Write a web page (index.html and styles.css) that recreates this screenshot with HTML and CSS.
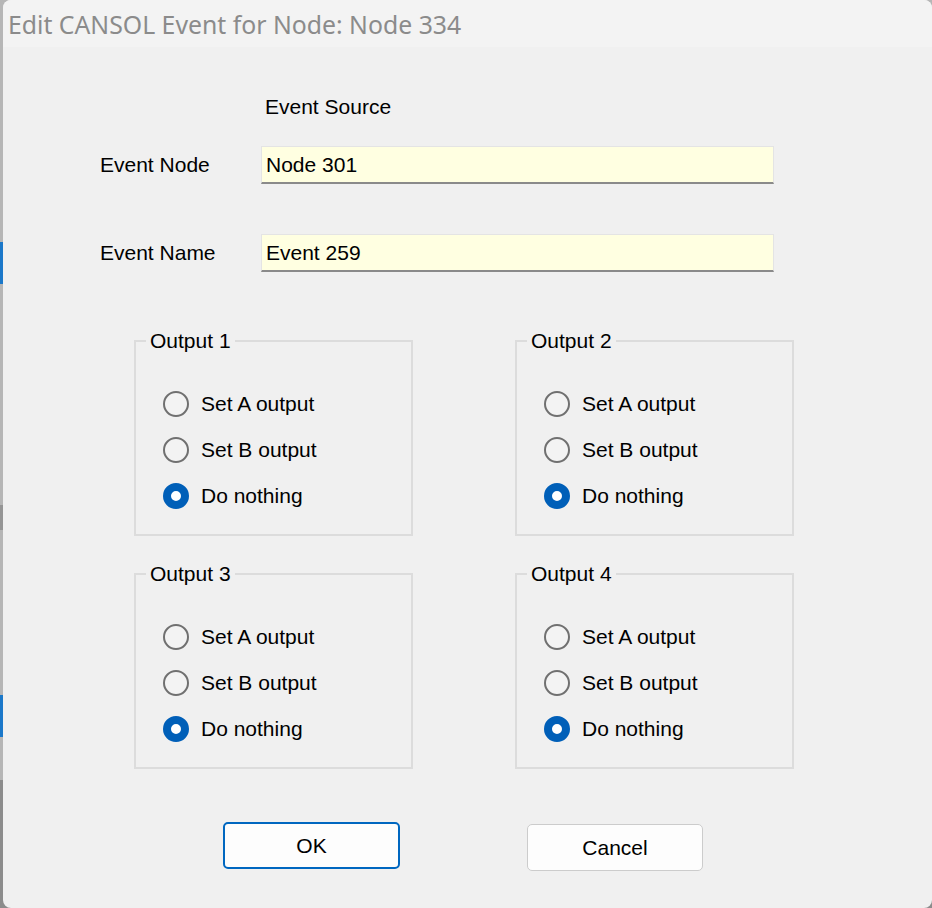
FILE: index.html
```html
<!DOCTYPE html>
<html lang="en">
<head>
<meta charset="utf-8">
<title>Edit CANSOL Event</title>
<link rel="stylesheet" href="styles.css">
</head>
<body>
<div class="window">
  <div class="titlebar">Edit CANSOL Event for Node: Node 334</div>
  <div class="content">
    <div class="form">
      <div class="source">Event Source</div>
      <div class="row row-node">
        <div class="label">Event Node</div>
        <div class="field">Node 301</div>
      </div>
      <div class="row row-name">
        <div class="label">Event Name</div>
        <div class="field">Event 259</div>
      </div>
    </div>

    <div class="groups">
      <fieldset class="group">
        <legend>Output 1</legend>
        <div class="radio-row"><span class="radio"></span>Set A output</div>
        <div class="radio-row"><span class="radio"></span>Set B output</div>
        <div class="radio-row"><span class="radio checked"></span>Do nothing</div>
      </fieldset>
      <fieldset class="group">
        <legend>Output 2</legend>
        <div class="radio-row"><span class="radio"></span>Set A output</div>
        <div class="radio-row"><span class="radio"></span>Set B output</div>
        <div class="radio-row"><span class="radio checked"></span>Do nothing</div>
      </fieldset>
      <fieldset class="group">
        <legend>Output 3</legend>
        <div class="radio-row"><span class="radio"></span>Set A output</div>
        <div class="radio-row"><span class="radio"></span>Set B output</div>
        <div class="radio-row"><span class="radio checked"></span>Do nothing</div>
      </fieldset>
      <fieldset class="group">
        <legend>Output 4</legend>
        <div class="radio-row"><span class="radio"></span>Set A output</div>
        <div class="radio-row"><span class="radio"></span>Set B output</div>
        <div class="radio-row"><span class="radio checked"></span>Do nothing</div>
      </fieldset>
    </div>

    <div class="buttons">
      <div class="btn btn-default">OK</div>
      <div class="btn btn-cancel">Cancel</div>
    </div>
  </div>
</div>
</body>
</html>
```

FILE: styles.css
```css
html, body {
  margin: 0;
  padding: 0;
}
body {
  width: 932px;
  height: 908px;
  overflow: hidden;
  background: linear-gradient(to bottom,
    #b6b6b6 0, #b6b6b6 242px,
    #1b78c9 242px, #1b78c9 284px,
    #b6b6b6 284px, #b6b6b6 505px,
    #959595 505px, #959595 530px,
    #b6b6b6 530px, #b6b6b6 695px,
    #1b78c9 695px, #1b78c9 737px,
    #b6b6b6 737px, #b6b6b6 780px,
    #8c8c8c 780px, #8c8c8c 908px);
  font-family: "Liberation Sans", Arial, sans-serif;
}
.window {
  margin-left: 3px;
  width: 929px;
  height: 908px;
  background: #f0f0f0;
  border-radius: 8px;
  overflow: hidden;
}
.titlebar {
  height: 47px;
  background: #f3f3f3;
  padding-left: 5px;
  display: flex;
  align-items: center;
  font-family: "Noto Sans", "Open Sans", sans-serif;
  font-size: 24.8px;
  color: #8b8b8b;
}
.content {
  font-size: 21px;
  color: #000;
}
.form {
  margin-top: 48px;
  margin-left: 97px;
  display: flex;
  flex-direction: column;
}
.source {
  margin-left: 165px;
  line-height: 24px;
}
.row {
  display: flex;
  align-items: center;
  height: 38px;
}
.row-node {
  margin-top: 27px;
}
.row-name {
  margin-top: 50px;
}
.label {
  width: 161px;
  line-height: 24px;
}
.field {
  box-sizing: border-box;
  width: 513px;
  height: 38px;
  background: #ffffe1;
  border: 1px solid #e4e4e4;
  border-bottom: 2px solid #8a8a8a;
  padding-left: 4px;
  display: flex;
  align-items: center;
}
.groups {
  margin-top: 57px;
  margin-left: 131px;
  display: grid;
  grid-template-columns: 279px 279px;
  column-gap: 102px;
  row-gap: 26px;
}
.group {
  margin: 0;
  padding: 28px 0 15px 0;
  border: 2px solid #dcdcdc;
  min-width: 0;
}
.group legend {
  margin-left: 10px;
  padding: 0 4px;
  line-height: 24px;
}
.radio-row {
  height: 46px;
  padding-left: 27px;
  display: flex;
  align-items: center;
  gap: 12px;
}
.radio {
  box-sizing: border-box;
  width: 26px;
  height: 26px;
  border-radius: 50%;
  border: 2px solid #707070;
  background: #f3f3f3;
}
.radio.checked {
  border: 8px solid #005fb8;
  background: #ffffff;
}
.buttons {
  margin-top: 53px;
  margin-left: 220px;
  display: flex;
  align-items: flex-start;
  gap: 127px;
}
.btn {
  box-sizing: border-box;
  height: 47px;
  background: #fdfdfd;
  border-radius: 5px;
  display: flex;
  align-items: center;
  justify-content: center;
}
.btn-default {
  width: 177px;
  border: 2px solid #0067c0;
}
.btn-cancel {
  width: 176px;
  margin-top: 2px;
  border: 1px solid #cccccc;
}
```
